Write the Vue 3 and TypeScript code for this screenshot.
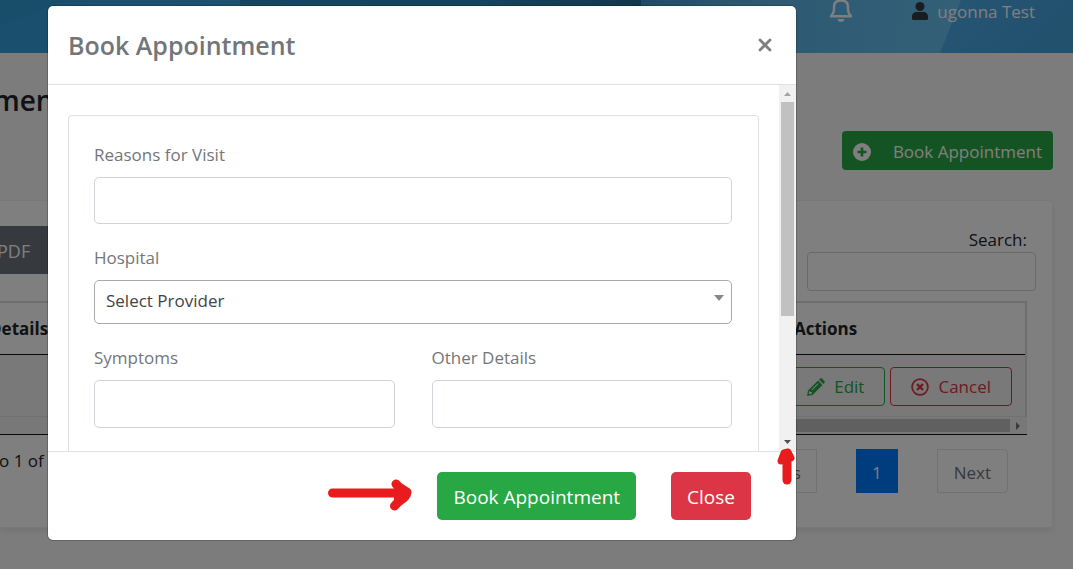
<script setup lang="ts">
import { ref } from 'vue'

const reason = ref('')
const provider = ref('')
const symptoms = ref('')
const details = ref('')
const search = ref('')
</script>

<template>
  <div class="page">
    <header class="topbar">
      <svg class="facets" viewBox="0 0 1073 53" preserveAspectRatio="none" aria-hidden="true">
        <defs>
          <linearGradient id="left" x1="0" x2="1"><stop offset="0" stop-color="#34a0dc" /><stop offset="1" stop-color="#38a4dc" /></linearGradient>
          <linearGradient id="deep" x1="0" x2="1"><stop offset="0" stop-color="#308cc4" /><stop offset="0.6" stop-color="#2c88bc" /><stop offset="1" stop-color="#266f98" /></linearGradient>
          <linearGradient id="light" gradientUnits="userSpaceOnUse" x1="641" y1="0" x2="950" y2="40"><stop offset="0" stop-color="#4294cc" /><stop offset="0.25" stop-color="#56acdc" /><stop offset="0.6" stop-color="#5eb8ea" /><stop offset="1" stop-color="#68c0ee" /></linearGradient>
          <linearGradient id="edge" x1="0" x2="1" y2="0.4"><stop offset="0" stop-color="#4cacea" /><stop offset="1" stop-color="#44a2dc" /></linearGradient>
        </defs>
        <rect width="241" height="53" fill="url(#left)" />
        <path d="M0 0H70L0 25Z" fill="#329cd4" />
        <rect x="240" width="401" height="53" fill="url(#deep)" />
        <rect x="641" width="432" height="53" fill="url(#light)" />
        <path d="M961 0H1073V53H940Z" fill="url(#edge)" />
      </svg>
      <button class="bell" type="button" aria-label="Notifications">
        <svg width="24" height="26" viewBox="0 0 24 26" fill="none" stroke="#fff" stroke-width="2.400" stroke-linejoin="round">
          <path d="M12 3.500C7.500 3.500 5 6 5 10V13C5 16 3.500 17.500 2 19.300H22C20.500 17.500 19 16 19 13V10C19 6 16.500 3.500 12 3.500Z" />
          <path d="M8.500 22H15.500C15 25.800 9 25.800 8.500 22Z" fill="#fff" stroke="none" />
        </svg>
      </button>
      <a class="user" href="#">
        <svg width="16" height="18" viewBox="0 0 16 18" fill="#343a40"><circle cx="8" cy="4.500" r="4.500" /><path d="M0 18V15C0 11.500 2 10 5 10H11C14 10 16 11.500 16 15V16.500Q16 18 14.500 18H1.500Q0 18 0 16.500Z" /></svg>
        ugonna Test
      </a>
    </header>

    <main class="content">
      <h1 class="page-title">ments</h1>
      <button class="book" type="button">
        <svg width="18" height="18" viewBox="0 0 18 18"><circle cx="9" cy="9" r="9" fill="#fff" /><path d="M9 4.500V13.500M4.500 9H13.500" stroke="#28a745" stroke-width="2.600" /></svg>
        Book Appointment
      </button>

      <section class="card">
        <div class="tools">
          <button class="pdf" type="button">PDF</button>
          <div class="search"><label for="search">Search:</label><input id="search" v-model="search" type="search" /></div>
        </div>
        <div class="table-box">
          <table>
            <thead>
              <tr><th>Details</th><th class="actions">Actions</th></tr>
            </thead>
            <tbody>
              <tr>
                <td></td>
                <td class="actions">
                  <div class="buttons">
                    <button class="edit" type="button">
                      <svg width="18" height="18" viewBox="0 0 18 18" fill="currentColor"><path d="M12 1.500L13.200 .4Q14 -.2 14.800 .5L17.500 3.200Q18.200 4 17.500 4.800L16.300 6Z" /><path fill-rule="evenodd" d="M11 2.500L15.500 7L5.500 17L0 18L1 12.500ZM4.500 11.500L10.800 5.200L11.500 5.900L5.200 12.200ZM1.800 15.200L2.800 16.200L4.800 15.800V14H3V12.900L2.200 13.200Z" /></svg>
                      Edit
                    </button>
                    <button class="cancel" type="button">
                      <svg width="18" height="18" viewBox="0 0 18 18" fill="none" stroke="currentColor"><circle cx="9" cy="9" r="7.900" stroke-width="1.700" /><path d="M6 6L12 12M12 6L6 12" stroke-width="2.400" /></svg>
                      Cancel
                    </button>
                  </div>
                </td>
              </tr>
            </tbody>
          </table>
          <div class="hbar"><span class="hthumb"></span><svg width="17" height="15" viewBox="0 0 17 15"><path d="M6 4V12L10 8Z" fill="#777" /></svg></div>
        </div>
        <div class="table-foot">
          <span>to 1 of 1 entries</span>
          <nav class="pages">
            <a class="prev" href="#">Previous</a>
            <a class="current" href="#">1</a>
            <a class="next" href="#">Next</a>
          </nav>
        </div>
      </section>
    </main>

    <div class="overlay">
      <div class="modal" role="dialog" aria-labelledby="dialog-title">
        <div class="modal-head">
          <h2 id="dialog-title">Book Appointment</h2>
          <button class="x" type="button" aria-label="Close dialog">
            <svg width="14" height="14" viewBox="0 0 14 14" stroke="#7f7f7f" stroke-width="2.800" stroke-linecap="round"><path d="M2 2L12 12M12 2L2 12" /></svg>
          </button>
        </div>
        <div class="modal-body">
          <div class="scroll-area">
            <form class="form" @submit.prevent>
              <label for="reason">Reasons for Visit</label>
              <input id="reason" v-model="reason" class="reason" type="text" />
              <label for="hospital">Hospital</label>
              <div class="select-wrap">
                <select id="hospital" v-model="provider"><option value="">Select Provider</option></select>
                <svg class="caret" width="10" height="6" viewBox="0 0 10 6"><path d="M0 0H10L5 6Z" fill="#888" /></svg>
              </div>
              <div class="pair">
                <div class="field"><label for="symptoms">Symptoms</label><input id="symptoms" v-model="symptoms" type="text" /></div>
                <div class="field"><label for="other">Other Details</label><input id="other" v-model="details" type="text" /></div>
              </div>
            </form>
          </div>
          <div class="vbar">
            <svg width="17" height="17" viewBox="0 0 17 17"><path d="M5 11H12L8.500 7Z" fill="#a3a3a3" /></svg>
            <span class="vthumb"></span>
            <svg width="17" height="17" viewBox="0 0 17 17"><path d="M5 6H12L8.500 10Z" fill="#505050" /></svg>
          </div>
        </div>
        <div class="modal-foot">
          <button class="submit" type="button">Book Appointment</button>
          <button class="close" type="button">Close</button>
        </div>
        <svg class="arrow-right" width="84" height="32" viewBox="0 0 84 32" fill="none" stroke="#e81c1c" stroke-width="9" stroke-linecap="round" stroke-linejoin="round"><path d="M4.500 14H77M68 5C71 9 75 10 79 13C79 19 71 21 66.500 27" /><path d="M68 7L79 14L68 23Z" fill="#e81c1c" stroke-width="4" /></svg>
        <svg class="arrow-up" width="18" height="37" viewBox="0 0 18 37" fill="none" stroke="#e81c1c" stroke-linecap="round" stroke-linejoin="round"><path d="M10 10V32" stroke-width="9" /><path d="M4 13L7 5L11 4L14 10Z" fill="#e81c1c" stroke-width="7" /></svg>
      </div>
    </div>
  </div>
</template>

<style>
body { margin: 0; background: #f8f8f8; }
</style>

<style scoped>
* { box-sizing: border-box; }
.page { position: relative; height: 100vh; min-height: 560px; overflow: hidden; background: #f8f9f8; color: #212529; font: 400 17px/24px "Open Sans", "Noto Sans", sans-serif; }
button, input, select { font: inherit; color: inherit; margin: 0; }
button { display: flex; align-items: center; cursor: pointer; }
svg { display: block; flex: none; }
.topbar { position: relative; display: flex; justify-content: flex-end; align-items: flex-start; gap: 59px; height: 53px; padding-right: 38px; }
.facets { position: absolute; inset: 0; width: 100%; height: 100%; }
.bell { position: relative; margin-top: -3px; padding: 0; border: 0; background: none; }
.user { position: relative; display: flex; align-items: center; gap: 9px; color: #fff; text-decoration: none; }
.user svg { margin-bottom: 2px; }
.content { display: flex; flex-direction: column; padding: 29px 20px 0 0; }
.page-title { margin: 0 0 13px -7px; font-size: 28px; line-height: 36px; font-weight: 600; }
.book { align-self: flex-end; gap: 22px; height: 39px; padding: 2px 11px 0; border: 0; border-radius: 4px; background: #28a745; color: #fff; }
.card { margin-top: 30px; height: 328px; border: 1px solid #f1f1f1; border-left: 0; border-radius: 0 4px 4px 0; background: #fff; box-shadow: 0 3px 6px rgba(0, 0, 0, .08); }
.tools { display: flex; justify-content: space-between; align-items: flex-start; padding: 25px 16px 0 0; }
.pdf { height: 48px; width: 74px; margin-left: -9px; padding: 2px 6px 0; border: 0; background: #6c757d; color: #fff; font-size: 18px; }
.search { width: 229px; margin-top: 2px; }
.search label { padding-right: 9px; text-align: right; }
.search input { display: block; width: 100%; height: 39px; border: 1px solid #ced4da; border-radius: 4px; background: #fff; outline: 0; appearance: none; }
.table-box { margin: 10px 25px 0 0; border-top: 2px solid #dcdcdc; border-bottom: 1px solid #111; }
table { width: 100%; border-collapse: collapse; border-right: 2px solid #dcdcdc; }
th { height: 51px; padding: 2px 0 0 24px; border-bottom: 1px solid #111; text-align: left; font-weight: 700; }
th:first-child { padding-left: 0; text-indent: -11px; }
.actions { width: 256px; }
td { height: 62px; padding: 2px 13px 0; background: #f2f2f2; border-bottom: 1px solid #dee2e6; }
.buttons { display: flex; justify-content: flex-end; gap: 5px; }
.buttons button { height: 39px; padding: 1px 20px 0; gap: 9px; border: 1px solid; border-radius: 4px; background: none; }
.edit { color: #28a745; }
.cancel { color: #dc3545; }
.hbar { display: flex; justify-content: flex-end; align-items: center; height: 17px; background: #f1f1f1; }
.hthumb { flex: 1; height: 13px; margin-left: 120px; background: #c1c1c1; }
.table-foot { display: flex; justify-content: space-between; padding: 14px 44px 0 0; }
.table-foot > span { margin-left: -7px; }
.pages { display: flex; gap: 39px; }
.pages a { height: 44px; padding: 0 15px; border: 1px solid #dee2e6; color: #6c757d; line-height: 46px; text-decoration: none; }
.pages .current { background: #007bff; border-color: #007bff; color: #fff; }
.pages .next { padding: 0 16px; border-radius: 0 4px 4px 0; }
.overlay { position: absolute; inset: 0; padding: 6px 277px 29px 48px; background: rgba(0, 0, 0, .5); }
.modal { position: relative; display: flex; flex-direction: column; height: 100%; border-radius: 5px; background: #fff; box-shadow: 0 0 0 1px rgba(0, 0, 0, .2); color: #737679; }
.modal-head { display: flex; justify-content: space-between; align-items: center; height: 79px; padding: 0 24px 0 20px; border-bottom: 1px solid #dee2e6; }
h2 { margin: 0; font-size: 25px; line-height: 36px; font-weight: 600; }
.x { padding: 0; border: 0; background: none; }
.modal-body { display: flex; flex: 1; min-height: 0; overflow: hidden; }
.scroll-area { flex: 1; padding: 30px 20px 0; overflow: hidden; }
.form { display: flex; flex-direction: column; height: 500px; padding: 25px 26px 25px 25px; border: 1px solid #dfdfdf; border-radius: 4px; }
.form label { height: 27px; margin-bottom: 9px; line-height: 27px; }
label { display: block; }
.form input { width: 100%; height: 48px; border: 1px solid #ced4da; border-radius: 5px; background: #fff; outline: 0; }
.form .reason { height: 47px; margin-bottom: 20px; }
.select-wrap { position: relative; margin-bottom: 20px; }
select { display: block; width: 100%; height: 44px; padding: 0 11px 2px; border: 1px solid #aaa; border-radius: 5px; appearance: none; background: #fff; color: #444; }
.caret { position: absolute; right: 8px; top: 15px; }
.pair { display: grid; grid-template-columns: 1fr 1fr; gap: 37px; }
.vbar { display: flex; flex-direction: column; align-items: center; width: 17px; background: #f1f1f1; }
.vthumb { width: 13px; height: 214px; margin-bottom: auto; background: #c1c1c1; }
.modal-foot { display: flex; justify-content: flex-end; gap: 35px; padding: 20px 45px; border-top: 1px solid #dee2e6; }
.modal-foot button { height: 48px; padding: 2px 16px 0; border: 0; border-radius: 5px; color: #fff; font-size: 19px; }
.submit { background: #28a745; }
.close { background: #dc3545; }
.arrow-right { position: absolute; left: 280px; bottom: 29px; }
.arrow-up { position: absolute; right: 1px; bottom: 55px; }
</style>
